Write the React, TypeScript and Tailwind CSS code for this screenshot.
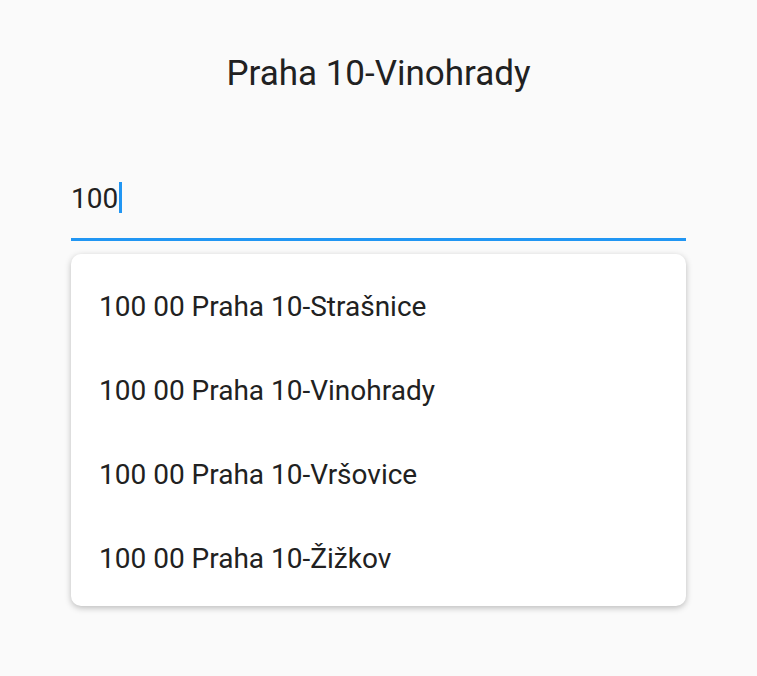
import React from 'react';

const options = [
  '100 00 Praha 10-Strašnice',
  '100 00 Praha 10-Vinohrady',
  '100 00 Praha 10-Vršovice',
  '100 00 Praha 10-Žižkov',
];

const App: React.FC = () => {
  return (
    <div
      className="min-h-[676px] w-full bg-[#fafafa] text-[#212121]"
      style={{ fontFamily: 'Roboto, "Noto Sans", sans-serif' }}
    >
      <div className="flex flex-col px-[71px]">
        <h1 className="mt-[52px] h-[44px] text-center text-[35px] leading-[44px]">Praha 10-Vinohrady</h1>

        {/* Text field */}
        <div className="mt-[83px] box-border flex h-[62px] items-start border-b-[3px] border-solid border-[#2196f3] pt-[3px]">
          <span className="text-[28px] leading-[34px]">100</span>
          <span className="ml-[1px] h-[31px] w-[3px] bg-[#2196f3]" />
        </div>

        {/* Suggestions */}
        <div className="mt-[13px] rounded-[10px] bg-white pt-[11px] pb-[5px] shadow-[0_2px_6px_rgba(0,0,0,0.25)]">
          {options.map(o => (
            <div key={o} className="flex h-[84px] items-center px-[28px] text-[28px]">
              {o}
            </div>
          ))}
        </div>
      </div>
    </div>
  );
};

export default App;
